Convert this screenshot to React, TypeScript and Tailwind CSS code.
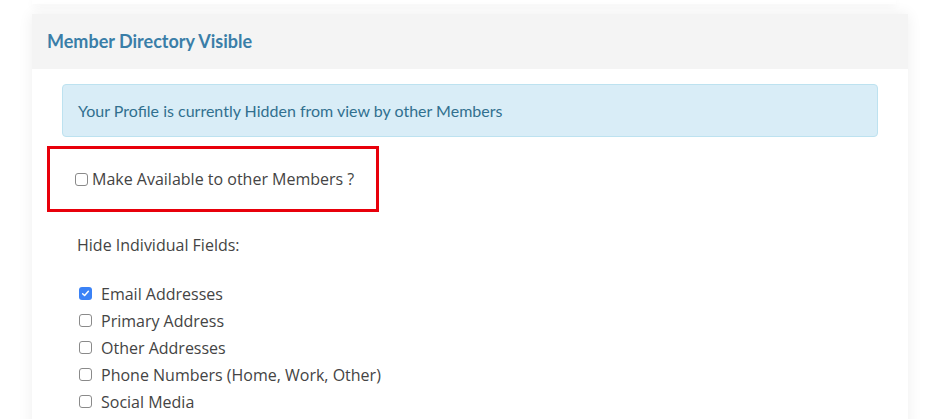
export default function App() {
  const fields = [
    { label: 'Email Addresses', checked: true },
    { label: 'Primary Address', checked: false },
    { label: 'Other Addresses', checked: false },
    { label: 'Phone Numbers (Home, Work, Other)', checked: false },
    { label: 'Social Media', checked: false },
  ];

  return (
    <div className="h-[419px] w-[928px] overflow-hidden bg-white">
      {/* card above, only its bottom edge shows */}
      <div className="mx-[32px] h-[4px] bg-white shadow-[0_2px_8px_rgba(0,0,0,0.06)]"></div>

      <div className="ml-[32px] mt-[10px] w-[876px] bg-white shadow-[0_0_14px_rgba(0,0,0,0.07)]">
        <div className="flex h-[55px] items-center bg-[#f4f4f4] px-[15px] font-['Lato',sans-serif] text-[18px] font-bold text-[#3a7ea8]">
          Member Directory Visible
        </div>

        <div className="px-[30px] pt-[15px] pb-[30px]">
          <div className="flex h-[53px] items-center rounded-[4px] border border-[#bde2f0] bg-[#d9edf7] px-[15px] font-['Lato',sans-serif] text-[16px] text-[#31708f]">
            Your Profile is currently Hidden from view by other Members
          </div>

          <div className="-ml-[15px] mt-[9px] flex h-[66px] w-[332px] items-center border-[3px] border-[#e8000b] pl-[25px] font-['Open_Sans',sans-serif] text-[16px] text-[#444]">
            <span className="mr-[4px] inline-block h-[13px] w-[13px] rounded-[3px] border border-[#8a8a8a] bg-white"></span>
            Make Available to other Members ?
          </div>

          <div className="mt-[21px] pl-[15px] font-['Open_Sans',sans-serif] text-[16px] text-[#444]">
            Hide Individual Fields:
          </div>

          <div className="mt-[23px] flex flex-col pl-[17px] font-['Open_Sans',sans-serif] text-[16px] text-[#444]">
            {fields.map((f) => (
              <div key={f.label} className="flex h-[27px] items-center">
                {f.checked ? (
                  <span className="mr-[9px] flex h-[13px] w-[13px] items-center justify-center rounded-[3px] bg-[#3b82f6]">
                    <svg width="9" height="9" viewBox="0 0 10 10" fill="none">
                      <path d="M1.8 5.2 L4 7.3 L8.2 2.6" stroke="white" strokeWidth="1.6" strokeLinecap="round" strokeLinejoin="round" />
                    </svg>
                  </span>
                ) : (
                  <span className="mr-[9px] inline-block h-[13px] w-[13px] rounded-[3px] border border-[#8a8a8a] bg-white"></span>
                )}
                {f.label}
              </div>
            ))}
          </div>
        </div>
      </div>
    </div>
  );
}
